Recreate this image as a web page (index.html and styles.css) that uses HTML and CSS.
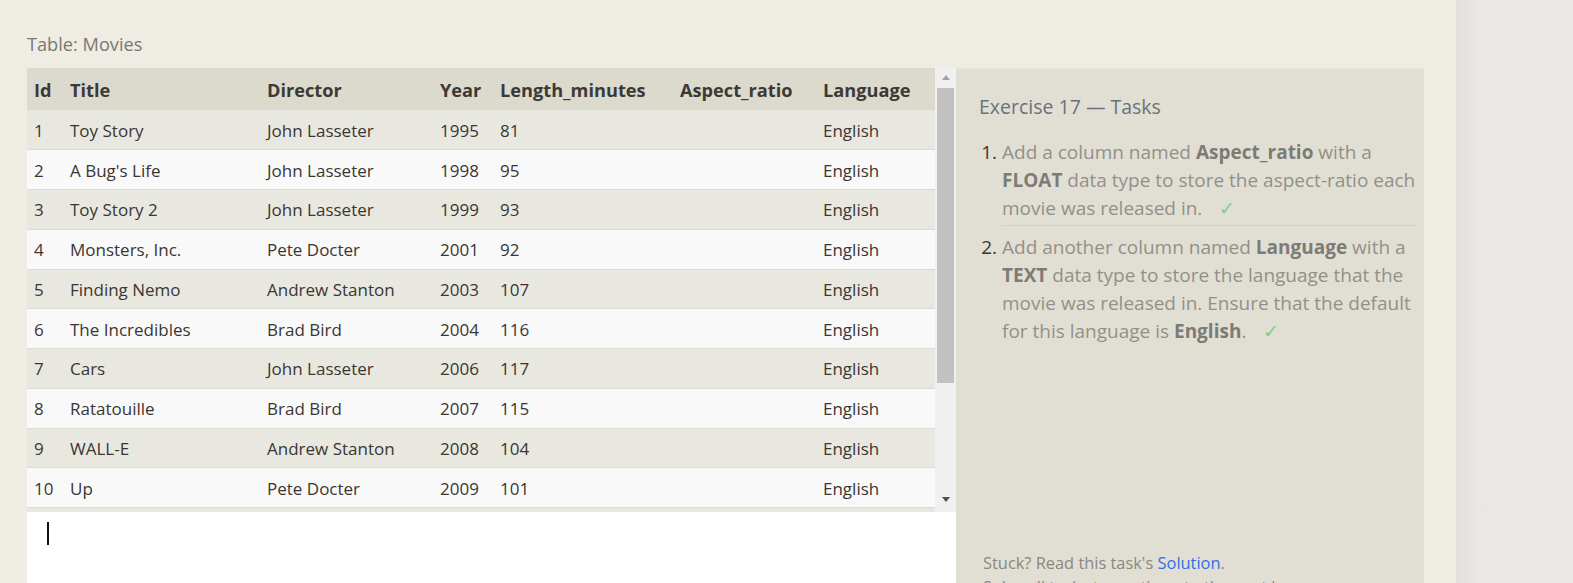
FILE: index.html
```html
<!DOCTYPE html>
<html>
<head>
<meta charset="utf-8">
<link rel="stylesheet" href="styles.css">
</head>
<body>
<div class="page">
  <main class="main">
    <div class="caption">Table: Movies</div>
    <div class="workspace">
      <div class="left">
        <div class="tablebox">
          <div class="tablescroll">
            <table class="results">
              <colgroup>
                <col style="width:35px"><col style="width:197px"><col style="width:173px"><col style="width:60px"><col style="width:180px"><col style="width:143px"><col style="width:120px">
              </colgroup>
              <thead>
                <tr><th>Id</th><th>Title</th><th>Director</th><th>Year</th><th>Length_minutes</th><th>Aspect_ratio</th><th>Language</th></tr>
              </thead>
              <tbody>
                <tr><td>1</td><td>Toy Story</td><td>John Lasseter</td><td>1995</td><td>81</td><td></td><td>English</td></tr>
                <tr><td>2</td><td>A Bug's Life</td><td>John Lasseter</td><td>1998</td><td>95</td><td></td><td>English</td></tr>
                <tr><td>3</td><td>Toy Story 2</td><td>John Lasseter</td><td>1999</td><td>93</td><td></td><td>English</td></tr>
                <tr><td>4</td><td>Monsters, Inc.</td><td>Pete Docter</td><td>2001</td><td>92</td><td></td><td>English</td></tr>
                <tr><td>5</td><td>Finding Nemo</td><td>Andrew Stanton</td><td>2003</td><td>107</td><td></td><td>English</td></tr>
                <tr><td>6</td><td>The Incredibles</td><td>Brad Bird</td><td>2004</td><td>116</td><td></td><td>English</td></tr>
                <tr><td>7</td><td>Cars</td><td>John Lasseter</td><td>2006</td><td>117</td><td></td><td>English</td></tr>
                <tr><td>8</td><td>Ratatouille</td><td>Brad Bird</td><td>2007</td><td>115</td><td></td><td>English</td></tr>
                <tr><td>9</td><td>WALL-E</td><td>Andrew Stanton</td><td>2008</td><td>104</td><td></td><td>English</td></tr>
                <tr><td>10</td><td>Up</td><td>Pete Docter</td><td>2009</td><td>101</td><td></td><td>English</td></tr>
                <tr><td>11</td><td>Toy Story 3</td><td>Lee Unkrich</td><td>2010</td><td>103</td><td></td><td>English</td></tr>
              </tbody>
            </table>
          </div>
          <div class="scrollbar">
            <div class="arrow up"></div>
            <div class="thumb"></div>
            <div class="track-rest"></div>
            <div class="arrow down"></div>
          </div>
        </div>
        <div class="editor"><span class="cursor"></span></div>
      </div>
      <aside class="tasks">
        <h2 class="tasks-title">Exercise 17 — Tasks</h2>
        <ol class="task-list">
          <li>Add a column named <b>Aspect_ratio</b> with a <b>FLOAT</b> data type to store the aspect-ratio each movie was released in. <span class="check">✓</span></li>
          <li>Add another column named <b>Language</b> with a <b>TEXT</b> data type to store the language that the movie was released in. Ensure that the default for this language is <b>English</b>. <span class="check">✓</span></li>
        </ol>
        <div class="spacer"></div>
        <p class="stuck">Stuck? Read this task's <a href="#">Solution</a>.</p>
        <p class="stuck">Solve all tasks to continue to the next lesson.</p>
      </aside>
    </div>
  </main>
  <div class="side"></div>
</div>
</body>
</html>
```
FILE: styles.css
```css
html, body {
  margin: 0;
  padding: 0;
  height: 100%;
  overflow: hidden;
}
body {
  font-family: "Segoe UI", "Open Sans", "Noto Sans", sans-serif;
  background: #efece4;
  color: #3a3633;
}
.page {
  display: flex;
  height: 583px;
}
.main {
  width: 1456px;
  flex: none;
  background: #efece4;
  padding: 32px 0 0 27px;
  box-sizing: border-box;
}
.side {
  flex: 1;
  background: linear-gradient(to right, #e2dfdc 0, #ebe7e4 25px, #ece8e5 100%);
}
.caption {
  font-size: 18.2px;
  color: #7a7874;
  line-height: 24px;
  height: 36px;
}
.workspace {
  display: flex;
  width: 1396px;
}
.left {
  width: 929px;
  flex: none;
  display: flex;
  flex-direction: column;
}
.tablebox {
  display: flex;
  height: 444px;
  background: #e8e7e0;
}
.tablescroll {
  width: 908px;
  overflow: hidden;
  height: 440px;
}
.results {
  border-collapse: collapse;
  table-layout: fixed;
  width: 908px;
  font-size: 17px;
}
.results th {
  background: #dbdacd;
  height: 42px;
  padding: 1px 0 0 8px;
  text-align: left;
  font-weight: 700;
  font-size: 18.2px;
  color: #3d3936;
  box-sizing: border-box;
}
.results td {
  height: 39.75px;
  padding: 1px 0 0 8px;
  border-bottom: 1px solid #dcdbd4;
  box-sizing: border-box;
  color: #3a3633;
  white-space: nowrap;
}
.results th:first-child,
.results td:first-child {
  padding-left: 7px;
}
.results tbody tr:nth-child(odd) td {
  background: #e9e8e0;
}
.results tbody tr:nth-child(even) td {
  background: #f9f9f9;
}
.scrollbar {
  width: 21px;
  flex: none;
  background: #f0f0f0;
  display: flex;
  flex-direction: column;
  align-items: center;
}
.arrow {
  width: 0;
  height: 0;
  border-left: 4.5px solid transparent;
  border-right: 4.5px solid transparent;
}
.arrow.up {
  border-bottom: 5px solid #a3a3a3;
  margin: 7px 0 8px;
}
.arrow.down {
  border-top: 5px solid #505050;
  margin: 0 0 10px;
}
.thumb {
  width: 17px;
  height: 295px;
  background: #c1c1c1;
}
.track-rest {
  flex: 1;
}
.editor {
  flex: 1;
  background: #ffffff;
  position: relative;
}
.cursor {
  position: absolute;
  left: 20px;
  top: 10px;
  width: 2px;
  height: 23px;
  background: #111;
}
.tasks {
  width: 468px;
  flex: none;
  background: #e1dfd4;
  border-top: 2px solid #e4e3da;
  height: 516px;
  box-sizing: border-box;
  padding: 23px 6px 0 23px;
  display: flex;
  flex-direction: column;
  color: #929089;
}
.tasks-title {
  margin: 0 0 17px;
  font-size: 19.5px;
  font-weight: 400;
  color: #6a707c;
  line-height: 28px;
}
.task-list {
  margin: 0;
  padding: 0 0 0 23px;
  font-size: 19px;
  line-height: 28px;
}
.task-list li {
  padding: 0 0 3px;
  margin-bottom: 7px;
  border-bottom: 1px solid #d3d1c6;
}
.task-list li:last-child {
  border-bottom: none;
}
.task-list li::marker {
  color: #3a3633;
}
.task-list b {
  color: #7d7b76;
  font-weight: 700;
}
.check {
  color: #7fcf90;
  margin-left: 12px;
}
.spacer {
  flex: 1;
}
.stuck {
  margin: 0 0 0 4px;
  font-size: 16.4px;
  line-height: 24px;
  color: #8a8780;
}
.stuck:last-child {
  margin-bottom: -15px;
}
.stuck a {
  color: #2f6fe4;
  text-decoration: none;
}
```
